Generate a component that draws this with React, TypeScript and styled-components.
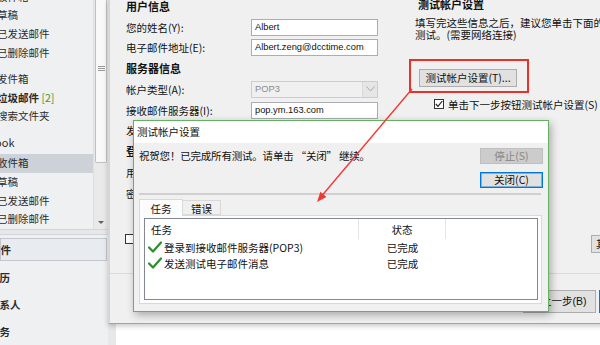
import React from 'react';
import styled, { createGlobalStyle } from 'styled-components';

const GlobalStyle = createGlobalStyle`
  html, body {
    margin: 0;
    padding: 0;
    background: #fff;
  }
  body {
    font-family: "Noto Sans CJK SC", "Noto Sans", sans-serif;
    font-size: 10.5px;
    color: #111;
  }
  * {
    box-sizing: border-box;
  }
`;

const CheckIcon = () => (
  <svg width="14" height="12" viewBox="0 0 14 12">
    <path d="M1 6.5 L5 10.5 L13 1.5" fill="none" stroke="#2f8f2f" strokeWidth="2.3" strokeLinecap="round" strokeLinejoin="round" />
  </svg>
);

const App: React.FC = () => {
  return (
    <Screen>
      <GlobalStyle />
      <Sidebar>
        <FolderPane>
          <FolderList>
            <Tree>
              <Folder>收件箱</Folder>
              <Folder>草稿</Folder>
              <Folder>已发送邮件</Folder>
              <Folder>已删除邮件</Folder>
              <Folder $gap={7.6}>发件箱</Folder>
              <Folder $bold>
                垃圾邮件 <Count>[2]</Count>
              </Folder>
              <Folder>搜索文件夹</Folder>
              <GroupHeader>Outlook</GroupHeader>
              <Folder $selected>收件箱</Folder>
              <Folder>草稿</Folder>
              <Folder>已发送邮件</Folder>
              <Folder>已删除邮件</Folder>
            </Tree>
          </FolderList>
          <ScrollTrack>
            <ScrollThumb>
              <Grip />
            </ScrollThumb>
            <ScrollArrow />
          </ScrollTrack>
        </FolderPane>
        <Splitter />
        <NavButton>邮件</NavButton>
        <NavList>
          <NavItem>日历</NavItem>
          <NavItem>联系人</NavItem>
          <NavItem>任务</NavItem>
        </NavList>
      </Sidebar>

      <Main>
        <AccountWindow>
          <WindowBody>
            <Form>
              <SectionTitle>用户信息</SectionTitle>
              <FormRow>
                <span>您的姓名(Y):</span>
                <Input>Albert</Input>
              </FormRow>
              <FormRow>
                <span>电子邮件地址(E):</span>
                <Input>Albert.zeng@dcctime.com</Input>
              </FormRow>
              <SectionTitle>服务器信息</SectionTitle>
              <FormRow>
                <span>帐户类型(A):</span>
                <Select>
                  POP3
                  <SelectArrow>
                    <svg width="9" height="6" viewBox="0 0 9 6">
                      <path d="M0.5 0.5 L4.5 5 L8.5 0.5" fill="none" stroke="#a8a8a8" strokeWidth="1" />
                    </svg>
                  </SelectArrow>
                </Select>
              </FormRow>
              <FormRow>
                <span>接收邮件服务器(I):</span>
                <Input>pop.ym.163.com</Input>
              </FormRow>
              <FormRow>
                <span>发送邮件服务器(SMTP)(O):</span>
                <Input>smtp.ym.163.com</Input>
              </FormRow>
              <SectionTitle>登录信息</SectionTitle>
              <FormRow>
                <span>用户名(U):</span>
                <Input>Albert.zeng@dcctime.com</Input>
              </FormRow>
              <FormRow>
                <span>密码(P):</span>
                <Input>**********</Input>
              </FormRow>
              <RememberRow>
                <CheckBox />
                <span>记住密码(R)</span>
              </RememberRow>
            </Form>

            <TestColumn>
              <RightTitle>测试帐户设置</RightTitle>
              <Hint>
                填写完这些信息之后，建议您单击下面的按钮进行帐户
                <br />
                测试。(需要网络连接)
              </Hint>
              <TestButton>测试帐户设置(T)...</TestButton>
              <AutoTestRow>
                <CheckBox $checked>
                  <svg width="8" height="8" viewBox="0 0 8 8">
                    <path d="M0.8 4 L3 6.4 L7.3 1" fill="none" stroke="#222" strokeWidth="1.2" />
                  </svg>
                </CheckBox>
                <span>单击下一步按钮测试帐户设置(S)</span>
              </AutoTestRow>
              <MoreButton>其他设置(M)...</MoreButton>
            </TestColumn>
          </WindowBody>
          <WindowFooter>
            <WizardButton>&lt; 上一步(B)</WizardButton>
            <WizardButton $focused>下一步(N) &gt;</WizardButton>
          </WindowFooter>
        </AccountWindow>
      </Main>

      <Dialog>
        <TitleBar>测试帐户设置</TitleBar>
        <DialogBody>
          <TopRow>
            <Message>祝贺您！已完成所有测试。请单击 “关闭” 继续。</Message>
            <DialogButtons>
              <DialogButton disabled>停止(S)</DialogButton>
              <DialogButton $focused>关闭(C)</DialogButton>
            </DialogButtons>
          </TopRow>
          <Separator />
          <TabStrip>
            <Tab $active>任务</Tab>
            <Tab>错误</Tab>
          </TabStrip>
          <TabPanel>
            <ListView>
              <ListHeader>
                <HeaderCell>任务</HeaderCell>
                <HeaderCell $center>状态</HeaderCell>
                <HeaderCell $last />
              </ListHeader>
              <ListRow>
                <TaskCell>
                  <CheckIcon />
                  登录到接收邮件服务器(POP3)
                </TaskCell>
                <StatusCell>已完成</StatusCell>
              </ListRow>
              <ListRow>
                <TaskCell>
                  <CheckIcon />
                  发送测试电子邮件消息
                </TaskCell>
                <StatusCell>已完成</StatusCell>
              </ListRow>
            </ListView>
          </TabPanel>
        </DialogBody>
      </Dialog>

      <Annotation width="600" height="345" viewBox="0 0 600 345">
        <line x1="412" y1="89" x2="322.5" y2="195" stroke="#ef3b36" strokeWidth="1.4" />
        <polygon points="317,202 326.5,196.9 320.4,191.8" fill="#ef3b36" />
      </Annotation>
    </Screen>
  );
};

export default App;

const Screen = styled.div`
  position: relative;
  width: 600px;
  height: 345px;
  overflow: hidden;
  display: flex;
  background: #fff;
`;

const Sidebar = styled.nav`
  width: 108px;
  flex: none;
  display: flex;
  flex-direction: column;
  background: #eff0f2;
  color: #2b2b2b;
  overflow: hidden;
`;

const FolderPane = styled.div`
  height: 234px;
  display: flex;
`;

const FolderList = styled.div`
  flex: 1;
  overflow: hidden;
`;

const Tree = styled.div`
  margin-top: -12.4px;
`;

const Folder = styled.div<{ $selected?: boolean; $bold?: boolean; $gap?: number }>`
  height: 18.7px;
  line-height: 18.7px;
  margin-top: ${(p) => p.$gap ?? 0}px;
  text-indent: -3px;
  white-space: nowrap;
  font-weight: ${(p) => (p.$bold ? 700 : 400)};
  background: ${(p) => (p.$selected ? '#cdd1d8' : 'transparent')};
`;

const Count = styled.span`
  color: #2e9b3a;
  font-weight: 400;
`;

const GroupHeader = styled.div`
  height: 18.7px;
  line-height: 18.7px;
  margin: 6.7px 0 3px;
  font-size: 11px;
  text-indent: -27px;
  white-space: nowrap;
`;

const ScrollTrack = styled.div`
  width: 15px;
  display: flex;
  flex-direction: column;
  background: #e9e9ea;
  border-left: 1px solid #dedfe1;
`;

const ScrollThumb = styled.div`
  height: 163px;
  margin: 0 1px;
  background: #f8f8f8;
  border: 1px solid #bfc0c2;
  border-top: none;
  border-radius: 0 0 2px 2px;
  display: flex;
  justify-content: center;
  padding-top: 66px;
`;

const Grip = styled.div`
  width: 7px;
  height: 5px;
  background: repeating-linear-gradient(#9a9a9a 0 1px, transparent 1px 2px);
`;

const ScrollArrow = styled.div`
  margin-top: auto;
  height: 14px;
  display: flex;
  align-items: center;
  justify-content: center;

  &::before {
    content: '';
    border-left: 3px solid transparent;
    border-right: 3px solid transparent;
    border-top: 3px solid #606060;
  }
`;

const Splitter = styled.div`
  height: 6px;
  background: #e6e7e9;
  border-top: 1px solid #d3d5d9;
  border-bottom: 1px solid #d3d5d9;
`;

const NavButton = styled.div`
  height: 23px;
  margin: 3px 1px 0 0;
  line-height: 21px;
  border: 1px solid #c3c7cd;
  background: #e8ebef;
  font-weight: 700;
  text-indent: -11px;
  white-space: nowrap;
  overflow: hidden;
`;

const NavList = styled.div`
  margin-top: 3.5px;
`;

const NavItem = styled.div`
  height: 27px;
  line-height: 27px;
  font-weight: 700;
  text-indent: -11px;
  white-space: nowrap;
`;

const Main = styled.main`
  flex: 1;
  display: flex;
  flex-direction: column;
  background: linear-gradient(to right, #e8e8e8 0 8px, #fff 8px);
`;

const AccountWindow = styled.div`
  height: 324px;
  flex: none;
  display: flex;
  flex-direction: column;
  background: #f0f0f0;
  border-left: 2px solid #d6d6d6;
  border-bottom: 1px solid #a3a3a3;
  box-shadow: 0 2px 5px rgba(0, 0, 0, 0.22);
`;

const WindowBody = styled.div`
  height: 273px;
  flex: none;
  display: flex;
  overflow: hidden;
`;

const Form = styled.div`
  width: 268px;
  flex: none;
  padding-left: 16px;
  margin-top: -4px;
`;

const SectionTitle = styled.div`
  height: 20.75px;
  line-height: 20.75px;
  font-size: 11px;
  font-weight: 700;
  white-space: nowrap;
`;

const FormRow = styled.div`
  height: 20.75px;
  display: grid;
  grid-template-columns: 125px 127px;
  align-items: center;
  white-space: nowrap;
`;

const Input = styled.div`
  height: 17px;
  padding: 0 3px;
  line-height: 15px;
  font-family: "Liberation Sans", "Noto Sans CJK SC", sans-serif;
  font-size: 9.3px;
  background: #fff;
  border: 1px solid #abadb3;
  overflow: hidden;
`;

const Select = styled.div`
  height: 17px;
  padding: 0 3px;
  line-height: 15px;
  font-family: "Liberation Sans", "Noto Sans CJK SC", sans-serif;
  font-size: 9.3px;
  background: #f0f0f0;
  border: 1px solid #cccccc;
  color: #8c8c8c;
  display: flex;
  justify-content: space-between;
`;

const SelectArrow = styled.span`
  width: 15px;
  margin-right: -3px;
  display: flex;
  align-items: center;
  justify-content: center;
  background: #e6e6e6;
  border-left: 1px solid #dadada;
`;

const RememberRow = styled.div`
  height: 14px;
  margin-top: 28px;
  margin-left: -1px;
  display: flex;
  align-items: center;
  gap: 5px;
  white-space: nowrap;
`;

const CheckBox = styled.span<{ $checked?: boolean }>`
  width: 10px;
  height: 10px;
  flex: none;
  border: 1px solid #333;
  background: #fff;
  display: flex;
  align-items: center;
  justify-content: center;
`;

const TestColumn = styled.div`
  flex: 1;
  min-width: 0;
  margin-left: 37px;
  margin-top: -4px;
  display: flex;
  flex-direction: column;
  align-items: flex-start;
  white-space: nowrap;
`;

const RightTitle = styled.div`
  height: 17px;
  line-height: 17px;
  margin-left: 3px;
  font-size: 11px;
  font-weight: 700;
`;

const Hint = styled.p`
  margin: 4px 0 0;
  line-height: 12px;
`;

const PushButton = styled.button`
  height: 18px;
  padding: 0;
  font: inherit;
  color: #111;
  background: #e1e1e1;
  border: 1px solid #adadad;
  line-height: 16px;
  white-space: nowrap;
`;

const TestButton = styled(PushButton)`
  position: relative;
  width: 98px;
  margin: 28px 0 0 4px;

  &::after {
    content: '';
    position: absolute;
    top: -11px;
    left: -11px;
    right: -13px;
    bottom: -7px;
    border: 2px solid #e9302b;
  }
`;

const AutoTestRow = styled.div`
  height: 14px;
  margin: 10px 0 0 19px;
  display: flex;
  align-items: center;
  gap: 4px;
`;

const MoreButton = styled(PushButton)`
  width: 92px;
  margin: 124px 0 0 176px;
  text-align: left;
  padding-left: 4px;
`;

const WindowFooter = styled.div`
  flex: 1;
  display: flex;
  justify-content: flex-end;
  align-items: flex-start;
  gap: 3px;
  padding: 16px 11px 0 0;
  border-top: 1px solid #dadada;
`;

const WizardButton = styled(PushButton)<{ $focused?: boolean }>`
  width: 73px;
  height: 23px;
  padding-left: 8px;
  line-height: 21px;
  text-align: left;
  font-family: "Liberation Sans", "Noto Sans CJK SC", sans-serif;
  font-size: 10.5px;
  border-color: ${(p) => (p.$focused ? '#0078d7' : '#adadad')};
  box-shadow: ${(p) => (p.$focused ? 'inset 0 0 0 1px #0078d7' : 'none')};
`;

const Dialog = styled.section`
  position: absolute;
  left: 133px;
  top: 120px;
  width: 416px;
  height: 192px;
  z-index: 5;
  display: flex;
  flex-direction: column;
  background: #f0f0f0;
  border: 1px solid #65b163;
  box-shadow: 2px 3px 8px rgba(0, 0, 0, 0.3);
`;

const TitleBar = styled.div`
  height: 22px;
  flex: none;
  padding-left: 3px;
  line-height: 22px;
  background: #fff;
`;

const DialogBody = styled.div`
  flex: 1;
  display: flex;
  flex-direction: column;
  padding: 5px 5px 7px 5px;
`;

const TopRow = styled.div`
  display: flex;
  justify-content: space-between;
  align-items: flex-start;
`;

const Message = styled.div`
  line-height: 16px;
  white-space: nowrap;
  letter-spacing: -0.2px;
`;

const DialogButtons = styled.div`
  width: 63px;
  display: flex;
  flex-direction: column;
  gap: 8px;
`;

const DialogButton = styled.button<{ $focused?: boolean }>`
  height: 16px;
  padding: 0;
  font: inherit;
  line-height: 14px;
  color: #111;
  background: #e1e1e1;
  border: 1px solid ${(p) => (p.$focused ? '#0078d7' : '#adadad')};
  box-shadow: ${(p) => (p.$focused ? 'inset 0 0 0 1px rgba(0, 120, 215, 0.45)' : 'none')};

  &:disabled {
    color: #858585;
    background: #cccccc;
    border-color: #bfbfbf;
  }
`;

const Separator = styled.div`
  height: 2px;
  margin: 5px 2px 0 0;
  background: #d0d0d0;
`;

const TabStrip = styled.div`
  height: 17px;
  margin-top: 3px;
  display: flex;
  align-items: flex-end;
  position: relative;
  z-index: 1;
`;

const Tab = styled.div<{ $active?: boolean }>`
  width: ${(p) => (p.$active ? 44 : 38)}px;
  height: ${(p) => (p.$active ? 17 : 15)}px;
  margin-bottom: ${(p) => (p.$active ? -1 : 0)}px;
  line-height: ${(p) => (p.$active ? 17 : 15)}px;
  text-align: center;
  background: ${(p) => (p.$active ? '#fcfcfc' : '#f0f0f0')};
  border: 1px solid #d9d9d9;
  border-bottom: ${(p) => (p.$active ? 'none' : '1px solid #d9d9d9')};
  border-left: ${(p) => (p.$active ? '1px solid #d9d9d9' : 'none')};
`;

const TabPanel = styled.div`
  flex: 1;
  display: flex;
  margin-right: 1px;
  padding: 2px 3px 3px 4px;
  background: #fcfcfc;
  border: 1px solid #d9d9d9;
`;

const ListView = styled.div`
  flex: 1;
  background: #fff;
  border: 1px solid #828790;
`;

const ListHeader = styled.div`
  height: 20px;
  display: grid;
  grid-template-columns: 214px 87px 1fr;
`;

const HeaderCell = styled.div<{ $center?: boolean; $last?: boolean }>`
  padding: 2px 0 0 ${(p) => (p.$center ? 0 : 6)}px;
  line-height: 18px;
  text-align: ${(p) => (p.$center ? 'center' : 'left')};
  border-right: ${(p) => (p.$last ? 'none' : '1px solid #e5e5e5')};
`;

const ListRow = styled.div`
  height: 16px;
  display: grid;
  grid-template-columns: 214px 87px 1fr;
  align-items: center;
`;

const TaskCell = styled.div`
  display: flex;
  align-items: center;
  gap: 2px;
  padding-left: 3px;
  white-space: nowrap;
`;

const StatusCell = styled.div`
  text-align: center;
`;

const Annotation = styled.svg`
  position: absolute;
  left: 0;
  top: 0;
  z-index: 10;
  pointer-events: none;
`;
